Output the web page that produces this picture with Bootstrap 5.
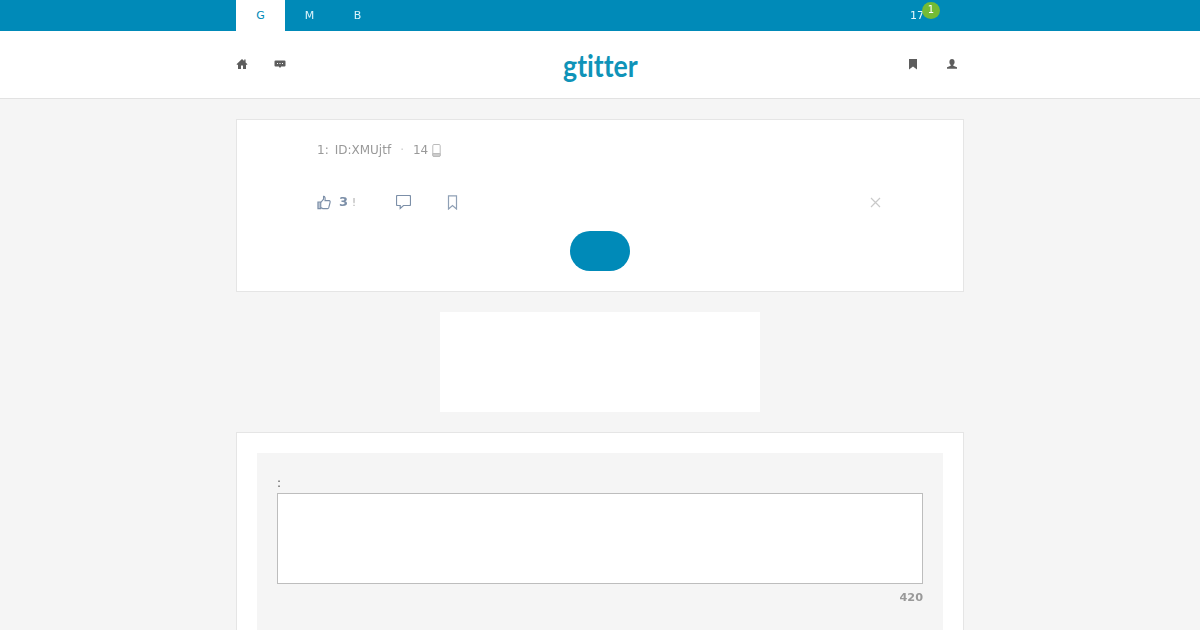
<!DOCTYPE html>
<html lang="en">
<head>
<meta charset="utf-8">
<title>gtitter</title>
<link href="https://cdn.jsdelivr.net/npm/bootstrap@5.3.0/dist/css/bootstrap.min.css" rel="stylesheet">
<style>
body{background:#f5f5f5;font-family:"DejaVu Sans",sans-serif;font-size:12px;color:#555;}
.wrap{width:728px;margin:0 auto;}
.topbar{background:#008ab8;height:31px;}
.topbar .wrap{height:31px;}
.tab-link{display:block;width:49px;height:31px;line-height:31px;text-align:center;font-size:11px;color:#d9f3fb;text-decoration:none;}
.tab-link.on{background:#fff;color:#008ab8;}
.tab-m{width:48px;padding-left:1px;will-change:transform;}
.count-box{position:relative;margin-right:40px;color:#e6f7fc;font-size:11px;line-height:31px;width:14px;will-change:transform;}
.count-pill{position:absolute;left:12px;top:2px;width:18px;height:17px;border-radius:50%;background:#74bb35;color:#fff;font-size:10px;line-height:16px;text-align:center;}
.head{background:#fff;height:68px;border-bottom:1px solid #e2e2e2;}
.head .wrap{height:67px;}
.logo{display:inline-block;font-family:"Lato",sans-serif;font-weight:700;font-size:31px;line-height:1;color:#0f93b8;text-decoration:none;padding:2px 0 0 0;transform:scaleX(.86);font-variant-ligatures:none;}
.side{width:120px;padding-bottom:2px;}
.chat-gap{gap:26px;}
.right-side{padding-right:6px;}
.head-ic{width:12px;height:12px;fill:#5d5d5d;display:block;}
.user-ic{margin-left:27px;}
.panel-box{background:#fff;border:1px solid #e5e5e5;}
.post{margin-top:20px;height:173px;padding:22px 80px 0;}
.meta{color:#999;font-size:12px;line-height:16px;height:16px;will-change:transform;}
.meta .dot{margin:0 9px;color:#ccc;}
.id-text{margin-left:6px;}
.phone-ic{margin-left:4px;}
.acts{margin-top:34px;height:20px;}
.act-ic{display:block;fill:none;stroke:#7c8fa8;stroke-width:1.2;}
.mark-ic{stroke:#8fa0b5;}
.thumb-cuff{fill:#b9c4d2;}
.likes{font-weight:700;font-size:13px;color:#7c8fa8;margin-left:8px;will-change:transform;}
.bang{color:#aaa;font-size:10px;margin-left:4px;will-change:transform;}
.cmt-ic{margin-left:40px;}
.mark-ic{margin-left:36px;}
.close-ic{position:absolute;right:2px;top:5px;}
.go-btn{display:block;width:60px;height:40px;border:0;border-radius:20px;background:#008ab8;margin:19px auto 0;padding:0;}
.adbox{width:320px;height:100px;background:#fff;margin:20px auto;}
.reply{padding:20px 20px 0;}
.reply-in{background:#f5f5f5;padding:20px 20px 30px;height:230px;}
.lab{color:#555;font-size:12px;line-height:20px;height:20px;will-change:transform;}
.entry{display:block;width:100%;height:91px;border:1px solid #bdbdbd;background:#fff;resize:none;border-radius:0;padding:4px;}
.counter{font-weight:700;font-size:11.3px;color:#999;text-align:right;margin-top:6px;line-height:15px;will-change:transform;}
</style>
</head>
<body>
<div class="topbar">
  <div class="wrap d-flex justify-content-between">
    <div class="d-flex">
      <a class="tab-link on" href="#">G</a>
      <a class="tab-link tab-m" href="#">M</a>
      <a class="tab-link tab-m" href="#">B</a>
    </div>
    <div class="count-box">17<span class="count-pill">1</span></div>
  </div>
</div>
<div class="head">
  <div class="wrap d-flex justify-content-between align-items-center">
    <div class="side d-flex chat-gap">
      <svg class="head-ic" viewBox="0 0 12 12"><path d="M6 1 0.5 6.2 1.3 7 2 6.4V11H5V7.6H7V11H10V6.4L10.7 7 11.5 6.2 9.6 4.4V1.6H8.2V3.1Z"/></svg>
      <svg class="head-ic" viewBox="0 0 12 12"><path d="M1.5 2.5H10.5Q11.5 2.5 11.5 3.5V7.5Q11.5 8.5 10.5 8.5H7.2L6 10 4.8 8.5H1.5Q.5 8.5.5 7.5V3.5Q.5 2.5 1.5 2.5Z"/><path d="M3 5H4V6H3ZM5.5 5H6.5V6H5.5ZM8 5H9V6H8Z" fill="#fff"/></svg>
    </div>
    <a class="logo" href="#">gtitter</a>
    <div class="side right-side d-flex justify-content-end">
      <svg class="head-ic" viewBox="0 0 12 12"><path d="M2 1H10V11.5L6 8.5 2 11.5Z"/></svg>
      <svg class="head-ic user-ic" viewBox="0 0 12 12"><path d="M6 1C7.6 1 8.6 2.2 8.6 3.9 8.6 5.2 8 6.2 7.3 6.8V7.7L11 9.3V10.8H1V9.3L4.7 7.7V6.8C4 6.2 3.4 5.2 3.4 3.9 3.4 2.2 4.4 1 6 1Z"/></svg>
    </div>
  </div>
</div>
<div class="wrap">
  <div class="panel-box post">
    <div class="meta d-flex align-items-center">
      <span>1:</span><span class="id-text">ID:XMUjtf</span><span class="dot">·</span><span>14</span>
      <svg class="phone-ic" width="9" height="13" viewBox="0 0 9 13" fill="none" stroke="#bbb"><rect x=".8" y=".5" width="7.4" height="12" rx="1.2"/><path d="M.8 9.5H8.2V11.3Q8.2 12.5 7 12.5H2Q.8 12.5.8 11.3Z" fill="#ccc"/></svg>
    </div>
    <div class="acts d-flex align-items-center position-relative">
      <svg class="act-ic" width="14" height="15" viewBox="0 0 15 16"><path class="thumb-cuff" d="M1 7.5H4V14.5H1Z"/><path d="M4 8 7 4.5V1.5C8.6 1.5 9 3 8.6 6H13C14 6 14.3 7 14 8L12.6 13.5C12.4 14.2 12 14.5 11.3 14.5H6.2L4 13.5"/></svg>
      <span class="likes">3</span><span class="bang">!</span>
      <svg class="act-ic cmt-ic" width="15" height="15" viewBox="0 0 15 15"><path d="M1.5.5H13.5Q14.5.5 14.5 1.5V9.5Q14.5 10.5 13.5 10.5H7.5L4.2 13.5V10.5H1.5Q.5 10.5.5 9.5V1.5Q.5.5 1.5.5Z"/></svg>
      <svg class="act-ic mark-ic" width="11" height="15" viewBox="0 0 11 15"><path d="M1.5.8H9.5V14L5.5 10.5 1.5 14Z"/></svg>
      <svg class="close-ic" width="11" height="11" viewBox="0 0 11 11" stroke="#c9c9c9" stroke-width="1.2"><path d="M1 1 10 10M10 1 1 10"/></svg>
    </div>
    <button class="go-btn" type="button" aria-label="submit"></button>
  </div>
  <div class="adbox"></div>
  <div class="panel-box reply">
    <div class="reply-in">
      <div class="lab">:</div>
      <textarea class="entry" aria-label="reply"></textarea>
      <div class="counter">420</div>
    </div>
  </div>
</div>
</body>
</html>
